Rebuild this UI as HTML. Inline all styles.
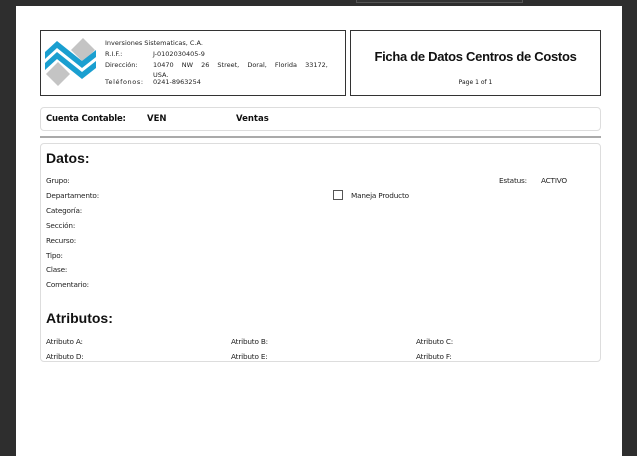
<!DOCTYPE html>
<html><head><meta charset="utf-8"><style>
*{margin:0;padding:0;box-sizing:border-box}
body{width:637px;height:456px;background:#2e2e2e;position:relative;overflow:hidden;font-family:"DejaVu Sans","Liberation Sans",sans-serif;color:#111}
.page{position:absolute;left:16px;top:6px;width:606px;height:450px;background:#fff}
.tb{position:absolute;left:356px;top:-2px;width:167px;height:5px;border:1px solid #555;background:#333}
.a{position:absolute;white-space:nowrap}
.s{font-size:6.5px;color:#222}
.l{font-size:7.3px;color:#222;letter-spacing:-0.2px}
.box{position:absolute;border:1.5px solid #333}
.rb{position:absolute;border:1px solid #ddd;border-radius:4px}
.h{font-family:"Liberation Sans",sans-serif;font-weight:bold}
</style></head><body>
<div class="tb"></div>
<div class="page"></div>
<div class="box" style="left:40px;top:30px;width:306px;height:66px"></div>
<div class="box" style="left:350px;top:30px;width:251px;height:66px"></div>
<svg class="a" style="left:44px;top:36px" width="54" height="52" viewBox="0 0 54 52">
<polygon points="39,2 51,14 39,26 27,14" fill="#c4c4c4"/>
<polygon points="14,26 26,38 14,50 2,38" fill="#c4c4c4"/>
<polygon points="1,16 13,5 38,25 52,14 52,21 38,32 13,12 1,23" fill="#1a9fd0"/>
<polygon points="1,27 13,16 38,36 52,25 52,32 38,43 13,23 1,34" fill="#1a9fd0"/>
</svg>
<div class="a s" style="left:105px;top:39px">Inversiones Sistematicas, C.A.</div>
<div class="a s" style="left:105px;top:50px">R.I.F.:</div>
<div class="a s" style="left:153px;top:50px">J-0102030405-9</div>
<div class="a s" style="left:105px;top:61px">Dirección:</div>
<div class="a s" style="left:153px;top:61px;word-spacing:6px">10470 NW 26 Street, Doral, Florida 33172,</div>
<div class="a s" style="left:153px;top:71px">USA.</div>
<div class="a s" style="left:105px;top:78px;letter-spacing:0.6px">Teléfonos:</div>
<div class="a s" style="left:153px;top:78px">0241-8963254</div>
<div class="a h" style="left:350px;top:49px;width:251px;text-align:center;font-size:13px;letter-spacing:-0.3px">Ficha de Datos Centros de Costos</div>
<div class="a" style="left:350px;top:79px;width:251px;text-align:center;font-size:6px">Page 1 of 1</div>
<div class="rb" style="left:40px;top:107px;width:561px;height:24px"></div>
<div class="a" style="left:46px;top:114px;font-size:8.5px;font-weight:bold;letter-spacing:-0.2px">Cuenta Contable:</div>
<div class="a" style="left:147px;top:114px;font-size:8.5px;font-weight:bold">VEN</div>
<div class="a" style="left:236px;top:114px;font-size:8.5px;font-weight:bold">Ventas</div>
<div class="a" style="left:40px;top:136px;width:561px;height:2px;background:#aaa"></div>
<div class="rb" style="left:40px;top:143px;width:561px;height:219px"></div>
<div class="a h" style="left:46px;top:150px;font-size:14px">Datos:</div>
<div class="a l" style="left:46px;top:176px">Grupo:</div>
<div class="a l" style="left:46px;top:191px">Departamento:</div>
<div class="a l" style="left:46px;top:206px">Categoría:</div>
<div class="a l" style="left:46px;top:221px">Sección:</div>
<div class="a l" style="left:46px;top:236px">Recurso:</div>
<div class="a l" style="left:46px;top:251px">Tipo:</div>
<div class="a l" style="left:46px;top:265px">Clase:</div>
<div class="a l" style="left:46px;top:280px">Comentario:</div>
<div class="a l" style="left:499px;top:176px">Estatus:</div>
<div class="a l" style="left:541px;top:176px">ACTIVO</div>
<div class="a" style="left:333px;top:190px;width:10px;height:10px;border:1px solid #555"></div>
<div class="a l" style="left:351px;top:191px">Maneja Producto</div>
<div class="a h" style="left:46px;top:310px;font-size:14px">Atributos:</div>
<div class="a l" style="left:46px;top:337px">Atributo A:</div>
<div class="a l" style="left:231px;top:337px">Atributo B:</div>
<div class="a l" style="left:416px;top:337px">Atributo C:</div>
<div class="a l" style="left:46px;top:352px">Atributo D:</div>
<div class="a l" style="left:231px;top:352px">Atributo E:</div>
<div class="a l" style="left:416px;top:352px">Atributo F:</div>
</body></html>
